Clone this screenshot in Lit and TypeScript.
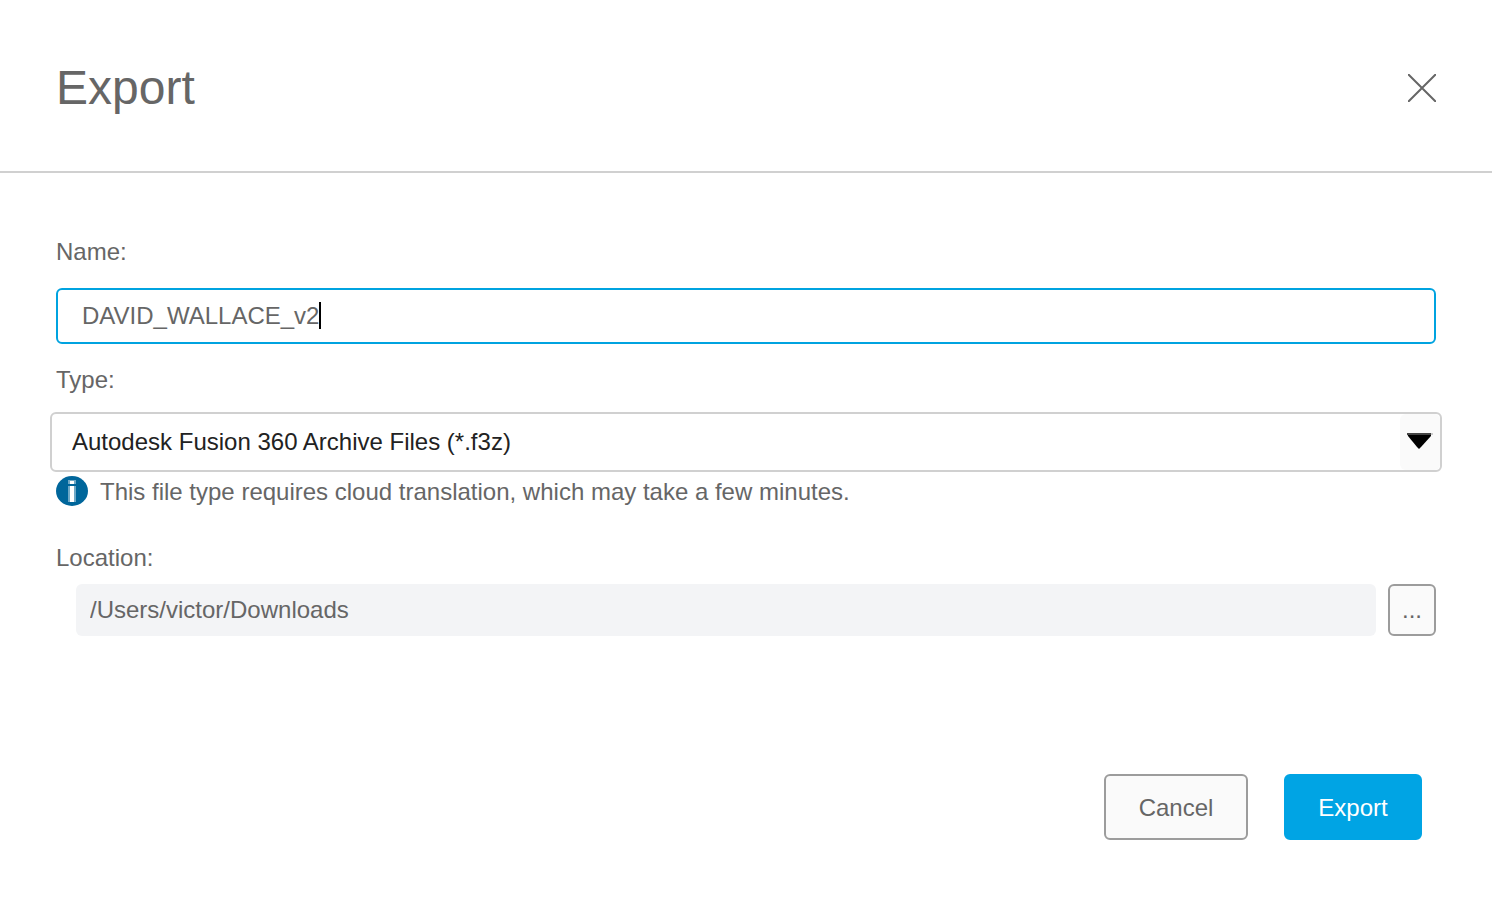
import { LitElement, html, css } from "lit";
import { customElement, state, query } from "lit/decorators.js";
import { styleMap } from "lit/directives/style-map.js";

@customElement("app-root")
export class AppRoot extends LitElement {
  static styles = css`
    :host {
      display: block;
      min-height: 100vh;
      background: #fff;
      color: #666;
      font: 24px/28px "Liberation Sans", Arial, sans-serif;
    }
    *,
    *::before {
      box-sizing: border-box;
    }
    input,
    select,
    button {
      margin: 0;
      font: inherit;
      color: inherit;
      border-radius: 6px;
      outline: none;
    }
    .header {
      display: flex;
      align-items: center;
      justify-content: space-between;
      padding: 60px 56px 55px;
      border-bottom: 2px solid #d0d0d0;
    }
    .title {
      margin: 0;
      font-size: 48px;
      line-height: 56px;
      font-weight: 400;
    }
    .close {
      display: flex;
      padding: 0;
      border: 0;
      background: none;
      cursor: pointer;
    }
    .body {
      padding: 65px 56px 0;
    }
    .label {
      display: block;
    }
    .name {
      position: relative;
      margin: 22px 0;
    }
    .name-input {
      display: block;
      width: 100%;
      height: 56px;
      padding: 0 24px;
      border: 2px solid #00a3e0;
      background: #fff;
      caret-color: transparent;
    }
    .caret {
      position: absolute;
      top: 14px;
      width: 2px;
      height: 27px;
      background: #000;
      pointer-events: none;
    }
    .type {
      position: relative;
      margin: 18px -6px 4px;
    }
    .type-select {
      appearance: none;
      display: block;
      width: 100%;
      height: 60px;
      padding: 0 60px 0 20px;
      border: 2px solid #d0d0d0;
      background: #fff;
      color: #222;
    }
    .arrow {
      position: absolute;
      top: 2px;
      right: 2px;
      bottom: 2px;
      width: 40px;
      padding: 19px 0 0 7px;
      border-radius: 6px;
      background: #fafafa;
      pointer-events: none;
    }
    .arrow svg {
      display: block;
    }
    .note {
      display: flex;
      gap: 12px;
      margin: 0 0 36px;
      align-items: flex-start;
      line-height: 32px;
    }
    .location {
      display: flex;
      gap: 12px;
      margin: 12px 0 0 20px;
    }
    .path {
      flex: 1;
      min-width: 0;
      height: 52px;
      padding: 0 14px;
      border: 0;
      background: #f3f4f6;
    }
    .button {
      border: 2px solid #9c9c9c;
      background: #fafafa;
      min-width: 138px;
      padding: 2px 32px 0;
      height: 66px;
      cursor: pointer;
    }
    .browse {
      min-width: 0;
      width: 48px;
      height: 52px;
      padding: 0;
    }
    .cancel {
      min-width: 144px;
    }
    .primary {
      border-color: #00a4e4;
      background: #00a4e4;
      color: #fff;
    }
    .footer {
      display: flex;
      justify-content: flex-end;
      gap: 36px;
      padding: 138px 70px 68px;
    }
  `;

  @state() private name = "DAVID_WALLACE_v2";
  @state() private caretLeft = 0;
  @query(".name-input") private field!: HTMLInputElement;

  firstUpdated() {
    this.placeCaret();
  }

  private onInput() {
    this.name = this.field.value;
    this.placeCaret();
  }

  // The insertion bar sits just after the last character of the name.
  private placeCaret() {
    const ctx = document.createElement("canvas").getContext("2d")!;
    const style = getComputedStyle(this.field);
    ctx.font = `${style.fontSize} ${style.fontFamily}`;
    this.caretLeft = Math.round(26 + ctx.measureText(this.name).width);
  }

  render() {
    return html`
      <header class="header">
        <h1 class="title">Export</h1>
        <button class="close" type="button" aria-label="Close">
          <svg width="28" height="28" viewBox="0 0 28 28" fill="none" stroke="#666" stroke-width="2">
            <path d="M0 0L28 28M28 0L0 28" />
          </svg>
        </button>
      </header>
      <main class="body">
        <label class="label" for="name">Name:</label>
        <div class="name">
          <input id="name" class="name-input" type="text" spellcheck="false" .value=${this.name} @input=${this.onInput} />
          <span class="caret" style=${styleMap({ left: `${this.caretLeft}px` })}></span>
        </div>
        <label class="label" for="type">Type:</label>
        <div class="type">
          <select id="type" class="type-select">
            <option>Autodesk Fusion 360 Archive Files (*.f3z)</option>
          </select>
          <span class="arrow">
            <svg width="26" height="16" viewBox="0 0 26 16">
              <path d="M0 0H24V3L14 14L12 16L10 14L1 3Z" fill="#000" />
              <path d="M0 0H24V2H0Z" fill="#444" />
              <path d="M24 0H26V2H24Z" fill="#ccc" />
            </svg>
          </span>
        </div>
        <p class="note">
          <svg width="32" height="30" viewBox="0 0 32 30">
            <ellipse cx="16" cy="15" rx="16" ry="15" fill="#00669b" />
            <path d="M12 4H20V8H12ZM12 10H20V26H12Z" fill="#6fa8c6" />
            <path d="M14 5H18V8H14ZM14 10H18V26H14Z" fill="#fff" />
          </svg>
          <span>This file type requires cloud translation, which may take a few minutes.</span>
        </p>
        <label class="label" for="location">Location:</label>
        <div class="location">
          <input id="location" class="path" type="text" readonly value="/Users/victor/Downloads" />
          <button class="button browse" type="button" aria-label="Browse">...</button>
        </div>
      </main>
      <footer class="footer">
        <button class="button cancel" type="button">Cancel</button>
        <button class="button primary" type="button">Export</button>
      </footer>
    `;
  }
}
